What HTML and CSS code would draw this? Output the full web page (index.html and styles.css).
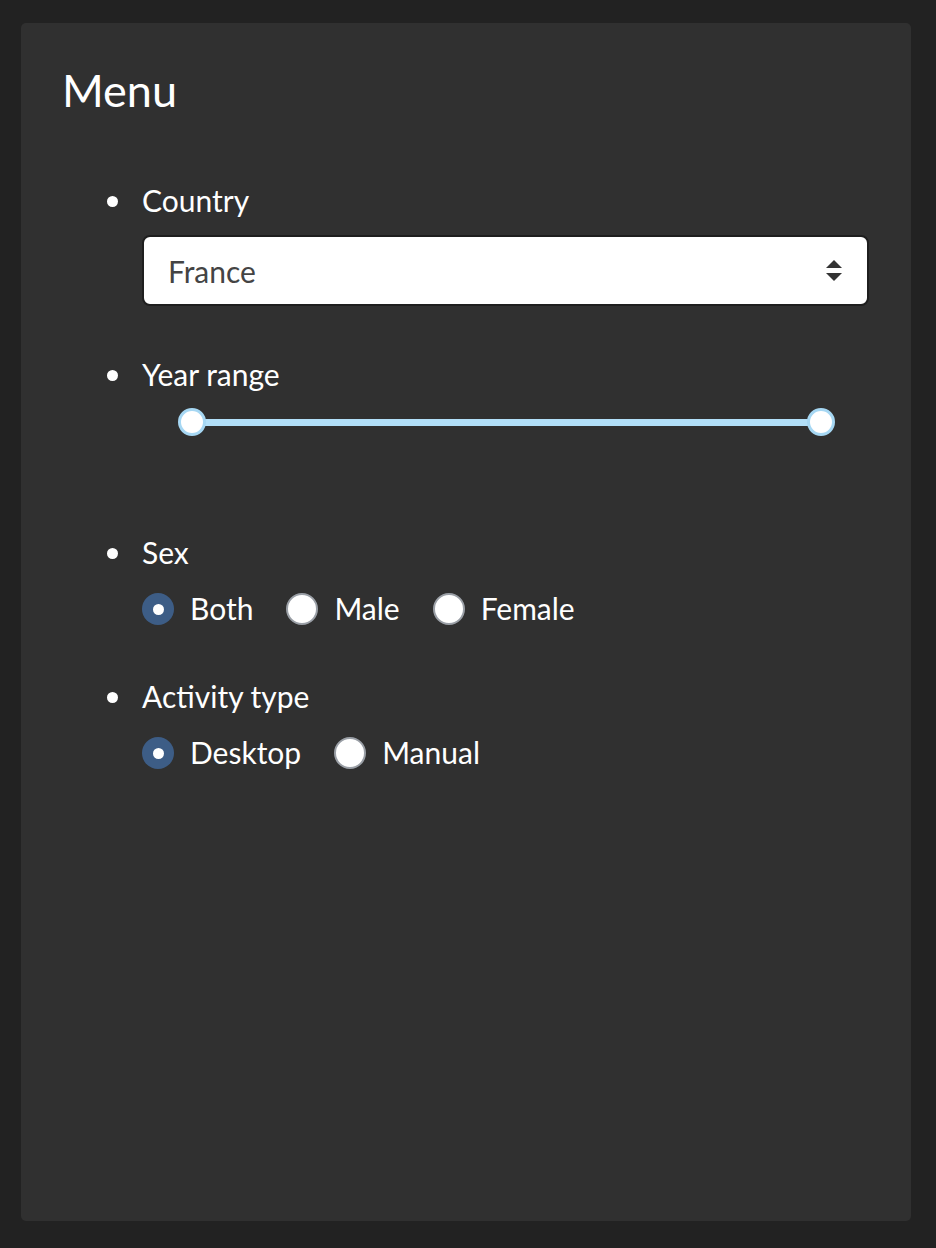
FILE: index.html
```html
<!DOCTYPE html>
<html lang="en">
<head>
<meta charset="utf-8">
<title>Menu</title>
<link rel="stylesheet" href="styles.css">
</head>
<body>
<div class="card">
  <h2 class="title">Menu</h2>
  <ul class="menu">
    <li class="item">
      <div class="label">Country</div>
      <div class="select">
        <span class="select-value">France</span>
        <svg class="select-arrows" width="18" height="22" viewBox="0 0 18 22">
          <path d="M9 0 L17 8 L1 8 Z" fill="#333"/>
          <path d="M1 13 L17 13 L9 21 Z" fill="#333"/>
        </svg>
      </div>
    </li>
    <li class="item">
      <div class="label">Year range</div>
      <div class="slider">
        <div class="track">
          <span class="handle handle-left"></span>
          <span class="handle handle-right"></span>
        </div>
      </div>
    </li>
    <li class="item">
      <div class="label">Sex</div>
      <div class="radios">
        <label class="radio"><span class="dot checked"></span><span>Both</span></label>
        <label class="radio"><span class="dot"></span><span>Male</span></label>
        <label class="radio"><span class="dot"></span><span>Female</span></label>
      </div>
    </li>
    <li class="item">
      <div class="label">Activity type</div>
      <div class="radios">
        <label class="radio"><span class="dot checked"></span><span>Desktop</span></label>
        <label class="radio"><span class="dot"></span><span>Manual</span></label>
      </div>
    </li>
  </ul>
</div>
</body>
</html>
```

FILE: styles.css
```css
html, body {
  margin: 0;
  padding: 0;
  background: #222222;
}
body {
  padding: 23px 25px 27px 21px;
  font-family: Lato, "Open Sans", sans-serif;
  color: #ffffff;
}
.card {
  box-sizing: border-box;
  width: 890px;
  height: 1198px;
  background: #303030;
  border-radius: 5px;
  padding: 42px 41px 0 41px;
}
.title {
  margin: 0;
  font-size: 45px;
  font-weight: 400;
  line-height: 50px;
}
.menu {
  margin: 67px 0 0 0;
  padding: 0 0 0 80px;
  list-style: none;
  display: flex;
  flex-direction: column;
  gap: 50px;
}
.item {
  font-size: 30px;
  line-height: 36px;
}
.label {
  height: 36px;
  display: flex;
  align-items: center;
  margin-left: -35px;
}
.label::before {
  content: "";
  flex: none;
  width: 11px;
  height: 11px;
  border-radius: 50%;
  background: #ffffff;
  margin-right: 24px;
  margin-top: 2px;
}
.select {
  box-sizing: border-box;
  margin-top: 17px;
  width: 727px;
  height: 71px;
  background: #ffffff;
  border: 2px solid #1e1e1e;
  border-radius: 8px;
  display: flex;
  align-items: center;
  justify-content: space-between;
  padding: 0 24px 0 24px;
  color: #444444;
}
.select-value {
  line-height: 36px;
}
.slider {
  height: 65px;
  padding: 0 49px 0 50px;
}
.track {
  position: relative;
  margin-top: 27px;
  height: 7px;
  background: #b2dff8;
}
.handle {
  position: absolute;
  top: -11px;
  box-sizing: border-box;
  width: 28px;
  height: 28px;
  border-radius: 50%;
  background: #ffffff;
  border: 3px solid #a6d7f3;
}
.handle-left { left: -14px; }
.handle-right { right: -14px; }
.radios {
  margin-top: 20px;
  margin-bottom: 2px;
  display: flex;
  gap: 33px;
}
.radio {
  display: flex;
  align-items: center;
  gap: 16px;
}
.dot {
  box-sizing: border-box;
  width: 32px;
  height: 32px;
  border-radius: 50%;
  background: #ffffff;
  border: 2px solid #9a9fa6;
  display: flex;
  align-items: center;
  justify-content: center;
  margin-top: 2px;
}
.dot.checked {
  background: #3d5d86;
  border: none;
}
.dot.checked::after {
  content: "";
  width: 11px;
  height: 11px;
  border-radius: 50%;
  background: #ffffff;
}
```
